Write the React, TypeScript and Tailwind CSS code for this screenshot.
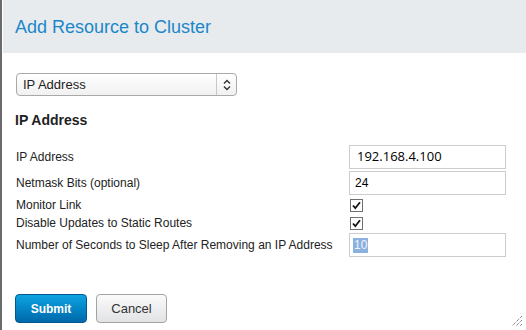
import React from "react";

const Check = () => (
  <span className="flex h-[13px] w-[13px] items-center justify-center border border-[#6f6f6f] bg-white">
    <svg width="11" height="11" viewBox="0 0 11 11">
      <path d="M2 5.5 L4.3 8.2 L9 2.2" stroke="#111" strokeWidth="1.8" fill="none" />
    </svg>
  </span>
);

export default function App() {
  return (
    <div className="relative h-[330px] w-[526px] overflow-hidden border-l-2 border-[#6b6b6b] bg-white pl-px" style={{ fontFamily: '"Liberation Sans", Arial, sans-serif' }}>
      <div className="flex h-[53px] items-center bg-[#e8ebee] pl-[12px]">
        <h1 className="pt-[1px] text-[18px] leading-[20px] text-[#1b87c9]">Add Resource to Cluster</h1>
      </div>
      <div className="pl-[13px]">
        <div className="mt-[20px] flex h-[23px] w-[221px] items-center rounded-[4px] border border-[#a9a9a9] bg-gradient-to-b from-white to-[#f1f1f1]">
          <span className="flex-1 pl-[6px] text-[13px] text-[#222]">IP Address</span>
          <span className="h-[21px] w-px bg-[#c8c8c8]" />
          <span className="flex w-[19px] justify-center">
            <svg width="8" height="12" viewBox="0 0 8 12">
              <path d="M1 4.5 L4 1.5 L7 4.5 M1 7.5 L4 10.5 L7 7.5" stroke="#333" strokeWidth="1.4" fill="none" />
            </svg>
          </span>
        </div>
        <h2 className="-ml-px mt-[14px] text-[14px] font-bold leading-[20px] text-[#222]">IP Address</h2>
        <div className="mt-[14px] grid grid-cols-[333px_157px] text-[12px] text-[#222]">
          <div className="flex h-[26px] items-center">IP Address</div>
          <div className="flex h-[26px] items-center">
            <div className="flex h-[24px] w-full items-center border border-[#cccccc] pl-[7px] text-[13px] text-black" style={{ fontFamily: '"Open Sans", sans-serif' }}>192.168.4.100</div>
          </div>
          <div className="flex h-[26px] items-center">Netmask Bits (optional)</div>
          <div className="flex h-[26px] items-center">
            <div className="flex h-[24px] w-full items-center border border-[#cccccc] pl-[5px] text-[12px] text-black">24</div>
          </div>
          <div className="flex h-[18px] items-center">Monitor Link</div>
          <div className="flex h-[18px] items-center pl-px"><Check /></div>
          <div className="flex h-[18px] items-center">Disable Updates to Static Routes</div>
          <div className="flex h-[18px] items-center pl-px"><Check /></div>
          <div className="flex h-[26px] items-center">Number of Seconds to Sleep After Removing an IP Address</div>
          <div className="flex h-[26px] items-center">
            <div className="flex h-[24px] w-full items-center border border-[#cccccc] pl-[3px] text-[12px]">
              <span className="bg-[#8db1de] px-px leading-[15px] text-[#eef3fb]">10</span>
            </div>
          </div>
        </div>
        <div className="-ml-px mt-[36px] flex gap-[9px]">
          <button className="h-[29px] w-[72px] rounded-[4px] border border-[#02588f] bg-gradient-to-b from-[#0fa3e2] to-[#0069ab] text-[12px] font-bold text-white">Submit</button>
          <button className="h-[29px] w-[71px] rounded-[4px] border border-[#a3a3a3] bg-gradient-to-b from-[#fafafa] to-[#e1e3e5] text-[13px] text-[#333]">Cancel</button>
        </div>
      </div>
      <svg className="absolute bottom-[3px] right-[3px]" width="12" height="12" viewBox="0 0 12 12">
        <path d="M11 1 L1 11 M11 5 L5 11 M11 9 L9 11" stroke="#555" strokeWidth="1" strokeDasharray="1 1" fill="none" />
      </svg>
    </div>
  );
}
